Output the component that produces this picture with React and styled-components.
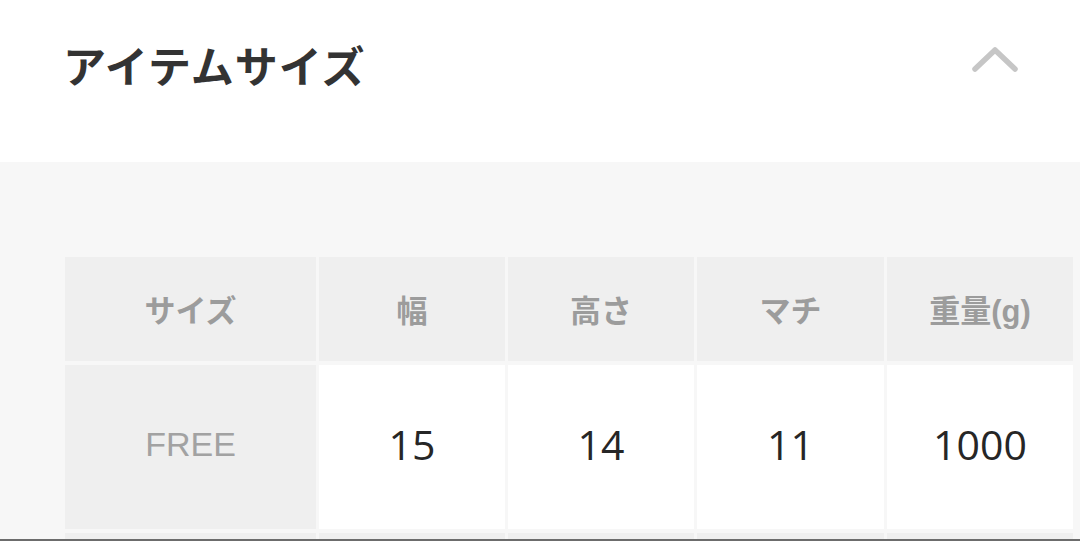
import React from "react";
import styled, { createGlobalStyle } from "styled-components";

const GlobalStyle = createGlobalStyle`
  html, body {
    margin: 0;
    padding: 0;
    background: #ffffff;
  }
  body {
    font-family: "Noto Sans CJK JP", "Noto Sans", sans-serif;
  }
`;

const columns = ["サイズ", "幅", "高さ", "マチ", "重量(g)"];
const rows = [{ size: "FREE", values: ["15", "14", "11", "1000"] }];

function App() {
  return (
    <Page>
      <GlobalStyle />
      <Header>
        <Title>アイテムサイズ</Title>
        <Toggle aria-label="閉じる">
          <svg width="50" height="30" viewBox="0 0 50 30">
            <path
              d="M5 25 L25 6 L45 25"
              fill="none"
              stroke="#c6c6c6"
              strokeWidth="5.5"
              strokeLinecap="round"
              strokeLinejoin="round"
            />
          </svg>
        </Toggle>
      </Header>
      <Body>
        <SizeTable>
          {columns.map((c) => (
            <HeadCell key={c}>{c}</HeadCell>
          ))}
          {rows.map((r) => (
            <React.Fragment key={r.size}>
              <SizeCell>{r.size}</SizeCell>
              {r.values.map((v, i) => (
                <ValueCell key={i}>{v}</ValueCell>
              ))}
            </React.Fragment>
          ))}
          {columns.map((c) => (
            <HeadCell key={"next-" + c} />
          ))}
        </SizeTable>
      </Body>
    </Page>
  );
}

const Page = styled.div`
  width: 1080px;
  height: 541px;
  box-sizing: border-box;
  border-bottom: 2px solid #6c6c6c;
  overflow: hidden;
  display: flex;
  flex-direction: column;
`;

const Header = styled.header`
  height: 162px;
  flex: none;
  background: #ffffff;
  display: flex;
  justify-content: space-between;
  align-items: flex-start;
  padding: 0 60px 0 63px;
`;

const Title = styled.h2`
  margin: 40px 0 0;
  font-size: 43px;
  line-height: 48px;
  font-weight: 700;
  color: #333333;
  letter-spacing: 1px;
`;

const Toggle = styled.button`
  margin-top: 44px;
  padding: 0;
  border: none;
  background: none;
  display: flex;
  cursor: pointer;
`;

const Body = styled.section`
  flex: 1;
  background: #f7f7f7;
  padding: 95px 6px 0 65px;
`;

const SizeTable = styled.div`
  display: grid;
  grid-template-columns: 251px 186px 186px 187px 186px;
  grid-auto-rows: 104px 164px 164px;
  column-gap: 3px;
  row-gap: 4px;
`;

const Cell = styled.div`
  display: flex;
  align-items: center;
  justify-content: center;
`;

const HeadCell = styled(Cell)`
  background: #efefef;
  color: #9c9c9c;
  font-family: "Liberation Sans", "Noto Sans CJK JP", sans-serif;
  font-size: 31px;
  font-weight: 700;
  padding-bottom: 2px;
`;

const SizeCell = styled(Cell)`
  background: #efefef;
  color: #a2a2a2;
  font-family: "Liberation Sans", sans-serif;
  font-size: 34px;
  font-weight: 400;
  padding-bottom: 6px;
`;

const ValueCell = styled(Cell)`
  background: #ffffff;
  color: #262626;
  font-family: "Open Sans", sans-serif;
  font-size: 41px;
  font-weight: 400;
  padding-bottom: 6px;
`;

export default App;
